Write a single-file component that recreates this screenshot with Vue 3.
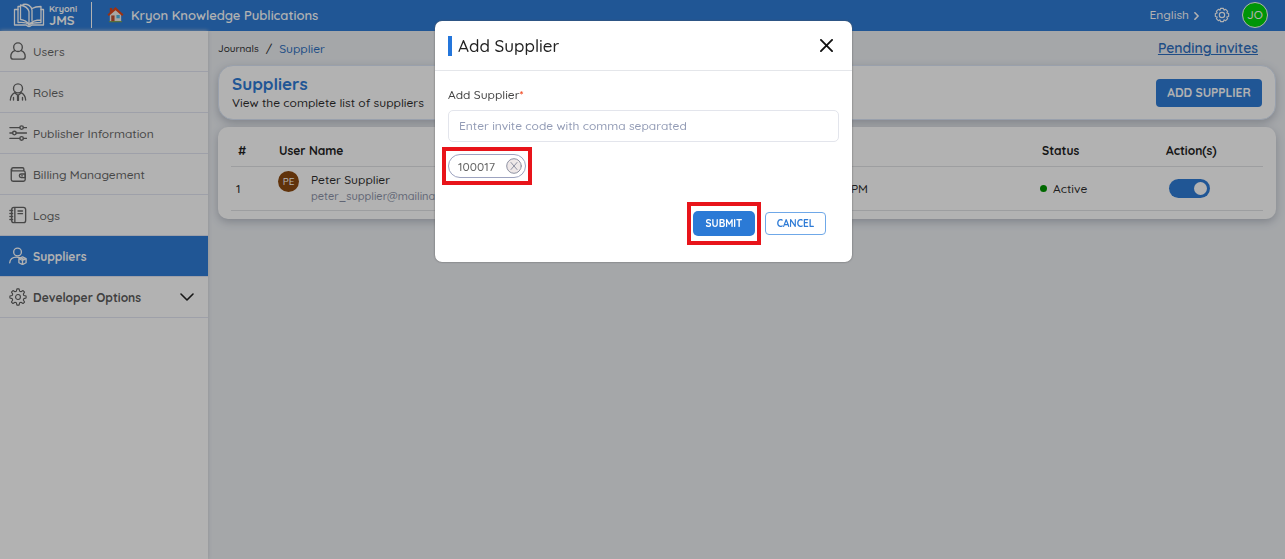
<script setup>
import { ref } from 'vue'

const nav = [
  { label: 'Users', icon: 'user' },
  { label: 'Roles', icon: 'role' },
  { label: 'Publisher Information', icon: 'sliders' },
  { label: 'Billing Management', icon: 'wallet' },
  { label: 'Logs', icon: 'book' },
  { label: 'Suppliers', icon: 'supplier', active: true },
  { label: 'Developer Options', icon: 'gear', more: true },
]
const enabled = ref(true)
const codes = ref('')
</script>

<template>
  <div class="page">
    <header class="topbar">
      <a class="brand" href="#">
        <svg class="brand-mark" viewBox="0 0 32 26" aria-hidden="true">
          <path d="M5 7.500H1.500V23H13c1 0 1.500 1.500 3 1.500S18 23 19 23h11.500V7.500H28" />
          <path d="M5 20.500V4.500h2.500M5 20.500c5-.5 9 0 11 2.500" />
          <path d="M7.500 3c4.500 1 7.500 3 8.500 6.500V22.500c-2-3-5-4.500-8.500-5Z" />
          <path d="M10 2.500c4.500-1 8.500 1.500 9 5.500v10.500" />
          <path d="M19 6.500C21.500 5 24 4.500 28 4.500V18c-5 0-9 1-12 4.500M28 18v2.500c-5 0-9 0-12 2.500" />
        </svg>
        <span class="brand-text"><small>Kryoni</small><b>JMS</b></span>
      </a>
      <a class="org" href="#">
        <svg class="home" viewBox="0 0 18 18" aria-hidden="true">
          <path fill="#f2ece6" d="M3 8 9 3l6 5v8.500H3Z" />
          <path fill="#d4471d" d="M3 2h2.500v3L3 7Z" />
          <path fill="#e04618" d="M9 1 17.500 9 16 10.500 9 4.500 2 10.500.5 9Z" />
          <path fill="#c0502e" d="M4.500 10H8v6.500H4.500Z" />
          <path fill="#4db7e5" d="M10 9.500h3.500V13H10Z" />
          <path fill="#7ca14c" d="M2 16h14v1.200H2Z" />
        </svg>
        <span>Kryon Knowledge Publications</span>
      </a>
      <div class="tools">
        <button class="lang" type="button">
          English
          <svg viewBox="0 0 6 10" aria-hidden="true"><path d="m1 1 4 4-4 4" /></svg>
        </button>
        <button class="settings" type="button" aria-label="Settings">
          <svg viewBox="0 0 24 24" aria-hidden="true">
            <circle cx="12" cy="12" r="4" />
            <path d="M9.800 2h4.400l.8 2.800 2.500-1.300 3 3-1.300 2.500 2.800.8v4.400l-2.800.8 1.300 2.500-3 3-2.500-1.300-.8 2.800H9.800L9 19.200l-2.500 1.300-3-3L4.800 15 2 14.200V9.800L4.800 9 3.500 6.500l3-3L9 4.800Z" />
          </svg>
        </button>
        <button class="me" type="button">JO</button>
      </div>
    </header>

    <div class="body">
      <nav class="sidebar">
        <a v-for="item in nav" :key="item.label" href="#" class="nav-item" :class="{ active: item.active, strong: item.more }">
          <svg class="nav-icon" viewBox="0 0 20 20" aria-hidden="true">
            <g v-if="item.icon === 'user'">
              <circle cx="10" cy="5.800" r="4.800" />
              <path d="M6.500 9.500C4 10.500 2 13 2 16c0 2 .8 3 2.500 3h11c1.700 0 2.500-1 2.500-3 0-3-2-5.500-4.500-6.500" />
            </g>
            <g v-else-if="item.icon === 'role'">
              <circle cx="10" cy="6" r="5" />
              <path d="M1.500 19c0-4 2-7 5.500-8.700M18.500 19c0-4-2-7-5.500-8.700M7 11.500l3 2.500 3-2.500M5 16V19M15 16V19" />
              <path d="M10 14.500V19" stroke-width="2.500" />
            </g>
            <g v-else-if="item.icon === 'sliders'">
              <path d="M1 4h11M16 4h3.500M1 10h3M8 10h11.500M1 16h11M16 16h3.500" />
              <circle cx="14" cy="4" r="2" /><circle cx="6" cy="10" r="2" /><circle cx="14" cy="16" r="2" />
            </g>
            <g v-else-if="item.icon === 'wallet'">
              <path d="M3 6.500V4.500C3 3.500 3.500 3 4.500 3H15c1 0 1.500.5 1.500 1.500v2M2.500 4.500V16c0 1.300.7 2 2 2H16c1.300 0 2-.7 2-2V8.500c0-1.300-.7-2-2-2H3" />
              <path d="M18 10h-4.500a2 2 0 0 0 0 4H18Z" />
              <path d="M14 12h1" />
            </g>
            <g v-else-if="item.icon === 'book'">
              <rect x="3" y="1.500" width="15.500" height="17" rx="2.500" />
              <path d="M6.500 2v16M1 5h3M1 8.300h3M1 11.700h3M1 15h3M10 5.500h5M10 8.500h5" />
            </g>
            <g v-else-if="item.icon === 'supplier'">
              <circle cx="9.500" cy="5.500" r="4.300" />
              <path d="M.8 17.500c.5-4.500 3.500-6.300 7.500-6.300 1.500 0 2.500.2 3.500.7" />
              <path d="m15 11 4 2v4.500l-4 2-4-2V13ZM11 13l4 2 4-2M15 15v4.500M13 12l4 2" />
            </g>
            <g v-else>
              <circle cx="10" cy="10" r="2.700" />
              <path d="M8.800 1h2.400l.6 2.600 1.500.6 2.300-1.400 1.700 1.700-1.400 2.300.6 1.500 2.500.5v2.400l-2.500.6-.6 1.500 1.400 2.300-1.700 1.700-2.300-1.400-1.500.6-.6 2.500H8.800l-.6-2.500-1.500-.6-2.300 1.400-1.700-1.700 1.400-2.300-.6-1.500L1 11.200V8.800l2.500-.5.6-1.500-1.400-2.300 1.700-1.700 2.300 1.400 1.500-.6Z" />
            </g>
          </svg>
          <span>{{ item.label }}</span>
          <svg v-if="item.more" class="chevron" viewBox="0 0 14 8" aria-hidden="true"><path d="m1 1 6 6 6-6" /></svg>
        </a>
      </nav>

      <main class="content">
        <div class="crumb-row">
          <nav class="crumbs" aria-label="Breadcrumb">
            <a class="crumb-root" href="#">Journals</a><span>/</span><a class="here" href="#">Supplier</a>
          </nav>
          <a class="pending" href="#">Pending invites</a>
        </div>

        <section class="card intro">
          <div>
            <h1>Suppliers</h1>
            <p>View the complete list of suppliers</p>
          </div>
          <button class="btn add" type="button">ADD SUPPLIER</button>
        </section>

        <section class="card list">
          <table>
            <colgroup>
              <col class="c-num"><col class="c-user"><col class="c-date"><col class="c-status"><col class="c-action">
            </colgroup>
            <thead>
              <tr><th class="num">#</th><th>User Name</th><th></th><th class="status">Status</th><th>Action(s)</th></tr>
            </thead>
            <tbody>
              <tr>
                <td class="num first">1</td>
                <td>
                  <div class="person">
                    <span class="avatar">PE</span>
                    <div class="who"><span>Peter Supplier</span><span class="mail">peter_supplier@mailinator.com</span></div>
                  </div>
                </td>
                <td class="date">PM</td>
                <td class="status"><span class="state"><i class="dot"></i>Active</span></td>
                <td><input v-model="enabled" class="switch" type="checkbox" aria-label="Supplier active"></td>
              </tr>
            </tbody>
          </table>
        </section>
      </main>
    </div>

    <div class="backdrop">
      <form class="dialog" role="dialog" aria-labelledby="dialog-title" @submit.prevent>
        <div class="dialog-head">
          <h2 id="dialog-title">Add Supplier</h2>
          <button class="close" type="button" aria-label="Close">
            <svg viewBox="0 0 14 14" aria-hidden="true"><path d="m1 1 12 12M13 1 1 13" /></svg>
          </button>
        </div>
        <div class="dialog-body">
          <label for="codes">Add Supplier<em>*</em></label>
          <input id="codes" v-model="codes" class="field" type="text" placeholder="Enter invite code with comma separated">
          <div class="chips">
            <span class="chip">
              100017
              <button type="button" aria-label="Remove 100017">
                <svg viewBox="0 0 16 16" aria-hidden="true"><circle cx="8" cy="8" r="7.300" /><path d="m5 4.500 6 7M11 4.500l-6 7" /></svg>
              </button>
            </span>
          </div>
          <div class="actions">
            <span class="mark"><button class="btn submit" type="submit">SUBMIT</button></span>
            <button class="btn cancel" type="button">CANCEL</button>
          </div>
        </div>
      </form>
    </div>
  </div>
</template>

<style>
body { margin: 0; }
</style>

<style scoped>
* { box-sizing: border-box; }
.page {
  min-height: 100vh;
  display: flex;
  flex-direction: column;
  font-family: Quicksand, Lato, "Noto Sans", sans-serif;
  font-size: 12px;
  font-weight: 500;
  color: #2d2d2d;
  background: #eceff3;
}
a { color: inherit; text-decoration: none; }
button { font: inherit; color: inherit; background: none; border: 0; padding: 0; cursor: pointer; }
svg { fill: none; stroke: currentColor; stroke-linecap: round; stroke-linejoin: round; display: block; flex: none; }

.topbar { height: 31px; display: flex; align-items: center; padding: 0 17px 2px 13px; background: #2e7bd6; color: #fff; }
.brand { display: flex; align-items: center; gap: 4px; height: 26px; padding-right: 14px; border-right: 1px solid #fff; }
.brand-mark { width: 32px; height: 26px; stroke-width: 1.3; }
.brand-text { display: flex; flex-direction: column; font-weight: 700; line-height: 13px; }
.brand-text small { font-size: 9px; line-height: 11px; }
.brand-text b { font-size: 13px; }
.org { display: flex; align-items: center; gap: 7px; margin-left: 15px; font-size: 13px; font-weight: 600; }
.home { width: 17px; height: 17px; stroke: none; }
.tools { margin-left: auto; display: flex; align-items: center; }
.lang { display: flex; align-items: center; gap: 5px; }
.lang svg { width: 5px; height: 8px; stroke-width: 2; margin-top: 2px; }
.settings { margin: 0 12px 0 15px; }
.settings svg { width: 16px; height: 16px; stroke-width: 1.700; }
.me { width: 26px; height: 26px; border-radius: 50%; border: 1px solid #fff; background: #00d60b; }

.body { flex: 1; display: flex; }
.sidebar { width: 208px; flex: none; background: #fff; box-shadow: 0 0 4px #c9cdd3; color: #666; }
.nav-item { display: flex; align-items: center; gap: 6px; height: 41px; padding: 0 14px 0 9px; border-bottom: 1px solid #e2e5f2; }
.nav-icon { width: 18px; height: 18px; stroke-width: 1.500; }
.nav-item.active { background: #2e7bd6; color: #fff; font-weight: 700; }
.nav-item.strong { font-weight: 700; color: #5c5c5c; }
.strong .nav-icon { stroke-width: 1.2; }
.chevron { width: 14px; height: 8px; margin-left: auto; stroke: #222; stroke-width: 1.600; }

.content { flex: 1; min-width: 0; padding: 6px 9px 0 10px; }
.crumb-row { display: flex; align-items: center; justify-content: space-between; height: 22px; padding-right: 18px; margin-bottom: 6px; }
.crumbs { display: flex; align-items: center; gap: 7px; }
.crumb-root { font-size: 10px; }
.here, .pending { color: #2e6fc0; }
.pending { font-size: 14px; font-weight: 600; text-decoration: underline; }
.card { background: #fff; border-radius: 10px; box-shadow: 0 3px 8px #b8bdc6; }
.intro { display: flex; align-items: center; justify-content: space-between; height: 55px; padding: 0 13px; border: 1px solid #dbe6f6; border-radius: 15px; margin-bottom: 7px; }
h1 { margin: 0; font-size: 17px; line-height: 20px; font-weight: 700; color: #2e7bd6; }
p { margin: 0; line-height: 18px; }
.btn { border-radius: 4px; font-weight: 700; }
.add { width: 106px; height: 28px; background: #2e7bd6; color: #fff; }
.list { padding: 9px 13px 8px; }
table { width: 100%; table-layout: fixed; border-collapse: collapse; }
.c-num { width: 36px; }
.c-date { width: 120px; }
.c-status { width: 286px; }
.c-action { width: 109px; }
th, td { padding: 0 12px; text-align: left; border-bottom: 1px solid #e1e3e6; }
th { height: 30px; font-weight: 700; color: #222; }
td { height: 44px; }
.num { padding: 0 0 0 7px; }
.first { padding-left: 5px; }
.status { padding-left: 174px; }
td.status { padding-left: 172px; }
.date { text-align: right; padding-right: 0; }
.person { display: flex; gap: 12px; margin-left: -1px; }
.avatar { width: 21px; height: 21px; border-radius: 50%; display: grid; place-items: center; background: #8b4a10; color: #fff; font-size: 10px; }
.who { display: flex; flex-direction: column; line-height: 17px; white-space: nowrap; }
.mail { color: #8c93a8; font-size: 11px; }
.state { display: flex; align-items: center; gap: 6px; }
.dot { width: 7px; height: 7px; border-radius: 50%; background: #009600; }
.switch { appearance: none; display: block; width: 41px; height: 19px; margin: 0 0 0 3px; padding: 3px; border-radius: 10px; background: #aaa; }
.switch::before { content: ""; display: block; width: 13px; height: 13px; border-radius: 50%; background: #fff; }
.switch:checked { background: #2e7bd6; }
.switch:checked::before { margin-left: auto; }

.backdrop { position: fixed; inset: 0; display: flex; justify-content: center; align-items: flex-start; padding: 21px 0 0 2px; background: rgba(0, 0, 0, .3); }
.dialog { width: 417px; background: #fff; border-radius: 7px; box-shadow: 0 0 2px #555; }
.dialog-head { height: 50px; display: flex; align-items: center; justify-content: space-between; padding: 0 19px 0 13px; border-bottom: 1px solid #e4e6ea; }
h2 { margin: 0; padding-left: 6px; border-left: 4px solid #2476db; font-size: 17px; line-height: 20px; font-weight: 500; color: #222; }
.close svg { width: 13px; height: 13px; stroke: #111; stroke-width: 2; }
.dialog-body { display: flex; flex-direction: column; padding: 15px 13px 17px; }
label { line-height: 18px; margin-bottom: 6px; color: #444; }
em { color: #f03c12; font-style: normal; }
.field { width: 100%; height: 32px; border: 1px solid #e3e5ec; border-radius: 5px; padding: 0 10px 2px; font: inherit; color: #444; background: #fff; }
.field::placeholder { color: #929bb5; opacity: 1; }
.chips { display: flex; margin-top: 12px; }
.chip { position: relative; display: flex; align-items: center; justify-content: space-between; width: 78px; height: 24px; padding: 0 3px 0 9px; border: 1px solid #9da3c0; border-radius: 12px; color: #666; }
.chip::after { content: ""; position: absolute; inset: -8px -7px; border: 4px solid #e8141a; pointer-events: none; }
.chip svg { width: 16px; height: 16px; color: #8f92a3; stroke-width: 1; }
.chip circle { fill: #eee8e8; }
.actions { display: flex; align-items: center; justify-content: flex-end; gap: 4px; margin-top: 24px; padding-right: 13px; font-size: 10px; }
.mark { display: flex; padding: 5px 2px; border: 4px solid #e8141a; }
.submit { width: 62px; height: 25px; background: #2b7ad6; color: #fff; border-radius: 5px; }
.cancel { width: 61px; height: 23px; border: 1px solid #6fa8e8; color: #2e7bd6; }
</style>
